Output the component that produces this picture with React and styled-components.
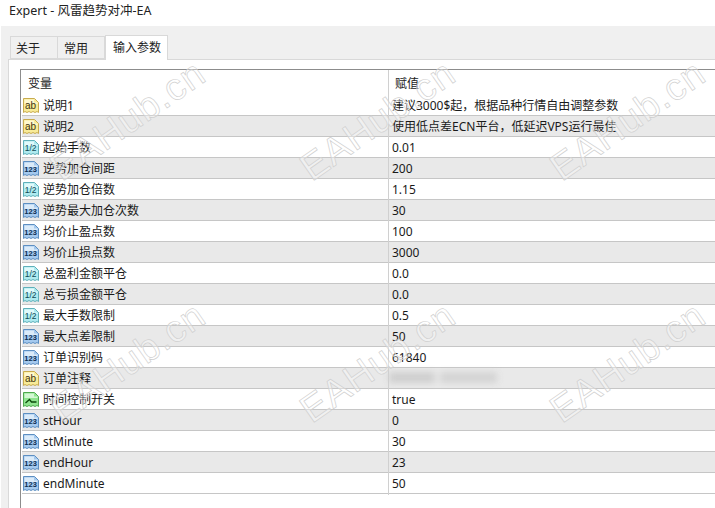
import React from "react";
import styled, { createGlobalStyle } from "styled-components";

const Global = createGlobalStyle`
  html, body { margin: 0; padding: 0; background: #fff; }
  body { font-family: "Noto Sans", "Noto Sans CJK SC", sans-serif; font-size: 12px; color: #111; }
  * { box-sizing: border-box; }
`;
const Window = styled.div`
  position: relative; width: 715px; height: 508px; overflow: hidden; background: #fff;
  display: flex; flex-direction: column;
`;
const TitleBar = styled.div`
  height: 26px; padding: 2px 0 0 9px; font-size: 12.5px; line-height: 18px; color: #222;
`;
const Body = styled.div`
  flex: 1; margin-left: 1px; background: #f0f0f0; padding: 9px 0 0 7px; display: flex; flex-direction: column;
`;
const Tabs = styled.div`
  display: flex; height: 24px; padding-left: 2px; align-items: flex-end; position: relative; z-index: 1;
`;
const Tab = styled.div`
  height: ${p => (p.$active ? "25px" : "23px")};
  width: ${p => p.$w}px;
  padding-left: ${p => p.$pad}px;
  margin-bottom: ${p => (p.$active ? "-1px" : "0")};
  background: ${p => (p.$active ? "#fff" : "#f0f0f0")};
  border: 1px solid #d9d9d9;
  border-bottom: ${p => (p.$active ? "none" : "1px solid #d9d9d9")};
  border-left: ${p => (p.$first || p.$active ? "1px solid #d9d9d9" : "none")};
  line-height: ${p => (p.$active ? "24px" : "23px")}; font-size: 12px; color: #222;
`;
const Panel = styled.div`
  flex: 1; background: #fff; border: 1px solid #d9d9d9; border-bottom: none; border-right: none;
  padding: 9px 0 0 11px; display: flex; min-height: 0;
`;
const Table = styled.div`
  flex: 1; border-left: 1px solid #8c8c8c; border-top: 1px solid #8c8c8c; padding-left: 1px;
  display: flex; flex-direction: column;
`;
const Row = styled.div`
  height: 21px; display: grid; grid-template-columns: 366px 1fr;
  background: ${p => (p.$alt ? "#e9e9e9" : "#fff")};
  border-bottom: 1px solid #c6c6c6;
`;
const HeadRow = styled.div`
  height: 25px; display: grid; grid-template-columns: 366px 1fr; padding-top: 2px;
`;
const HeadName = styled.div`
  padding-left: 6px; line-height: 23px; color: #222;
`;
const HeadValue = styled.div`
  border-left: 1px solid #d0d0d0; padding-left: 6px; line-height: 23px; margin-top: -2px; padding-top: 2px; color: #222;
`;
const NameCell = styled.div`
  display: flex; align-items: center; gap: 4px; padding-left: 1px; line-height: 22px; color: #1a1a1a; white-space: nowrap;
`;
const ValueCell = styled.div`
  border-left: 1px solid #d0d0d0; padding-left: 3px; line-height: 22px; color: #1a1a1a; white-space: nowrap;
`;
const Blurred = styled.span`
  display: inline-block; width: 108px; height: 11px; margin: 4px 0 0 -3px; vertical-align: top;
  background: linear-gradient(90deg, #cfcfcf 0 42%, #e4e4e4 42% 48%, #d4d4d4 48% 100%);
  filter: blur(3px);
`;
const Watermarks = styled.div`
  position: absolute; inset: 0; pointer-events: none;
`;
const Mark = styled.div`
  position: absolute; left: ${p => p.$x}px; top: ${p => p.$y}px;
  font-family: "Liberation Sans", sans-serif; font-size: 38px; line-height: 44px; white-space: nowrap;
  color: rgba(255, 255, 255, 0.35); -webkit-text-stroke: 0.7px #d0d0d0; letter-spacing: 1px;
  transform: rotate(-35deg); transform-origin: center;
`;

const palettes = {
  ab: { fill: "#f8eb98", edge: "#c8ab4e", inner: "#fff9cf", label: "ab", ink: "#3f3410", size: 10, weight: 400 },
  frac: { fill: "#aeeaef", edge: "#5fb0ba", inner: "#e0fafb", label: "1/2", ink: "#0f4a55", size: 8.5, weight: 400 },
  int: { fill: "#a4c9ee", edge: "#5d8fc2", inner: "#dbebf9", label: "123", ink: "#0e2f52", size: 7.5, weight: 700 },
  bool: { fill: "#8fe48f", edge: "#4fa84f", inner: "#d4f7d4", label: null },
};
const SHEET = "M.5 .5h11l4 4v10l-1.5-1-2 1-2-1-2 1-2-1-2 1-2-1-1.5 1z";
const Icon = ({ kind }) => {
  const p = palettes[kind];
  return (
    <svg width="16" height="16" viewBox="0 0 16 16">
      <path d={SHEET} fill={p.fill} stroke={p.edge} />
      <path d="M1.5 1.5h9.5v3h3.5v1.5H1.5z" fill={p.inner} />
      {p.label ? (
        <text x="7.6" y="11.4" textAnchor="middle" fontFamily="Liberation Sans, sans-serif" fontSize={p.size} fontWeight={p.weight} fill={p.ink}>{p.label}</text>
      ) : (
        <path d="M2.5 11 6.5 7.5 8.5 10h5" fill="none" stroke="#0b4a0b" strokeWidth="1.3" />
      )}
    </svg>
  );
};

const rows = [
  ["ab", "说明1", "建议3000$起，根据品种行情自由调整参数"],
  ["ab", "说明2", "使用低点差ECN平台，低延迟VPS运行最佳"],
  ["frac", "起始手数", "0.01"],
  ["int", "逆势加仓间距", "200"],
  ["frac", "逆势加仓倍数", "1.15"],
  ["int", "逆势最大加仓次数", "30"],
  ["int", "均价止盈点数", "100"],
  ["int", "均价止损点数", "3000"],
  ["frac", "总盈利金额平仓", "0.0"],
  ["frac", "总亏损金额平仓", "0.0"],
  ["frac", "最大手数限制", "0.5"],
  ["int", "最大点差限制", "50"],
  ["int", "订单识别码", "61840"],
  ["ab", "订单注释", null],
  ["bool", "时间控制开关", "true"],
  ["int", "stHour", "0"],
  ["int", "stMinute", "30"],
  ["int", "endHour", "23"],
  ["int", "endMinute", "50"],
];
const marks = [
  [38, 98], [288, 98], [538, 98],
  [38, 340], [288, 340], [538, 340],
];

export default function App() {
  return (
    <Window>
      <Global />
      <TitleBar>Expert - 风雷趋势对冲-EA</TitleBar>
      <Body>
        <Tabs>
          <Tab $first $w={48} $pad={5}>关于</Tab>
          <Tab $w={47} $pad={6}>常用</Tab>
          <Tab $active $w={63} $pad={7}>输入参数</Tab>
        </Tabs>
        <Panel>
          <Table>
            <HeadRow>
              <HeadName>变量</HeadName>
              <HeadValue>赋值</HeadValue>
            </HeadRow>
            {rows.map(([kind, name, value], i) => (
              <Row key={name} $alt={i % 2 === 1}>
                <NameCell><Icon kind={kind} />{name}</NameCell>
                <ValueCell>{value === null ? <Blurred /> : value}</ValueCell>
              </Row>
            ))}
          </Table>
        </Panel>
      </Body>
      <Watermarks>
        {marks.map(([x, y]) => <Mark key={`${x}-${y}`} $x={x} $y={y}>EAHub.cn</Mark>)}
      </Watermarks>
    </Window>
  );
}
